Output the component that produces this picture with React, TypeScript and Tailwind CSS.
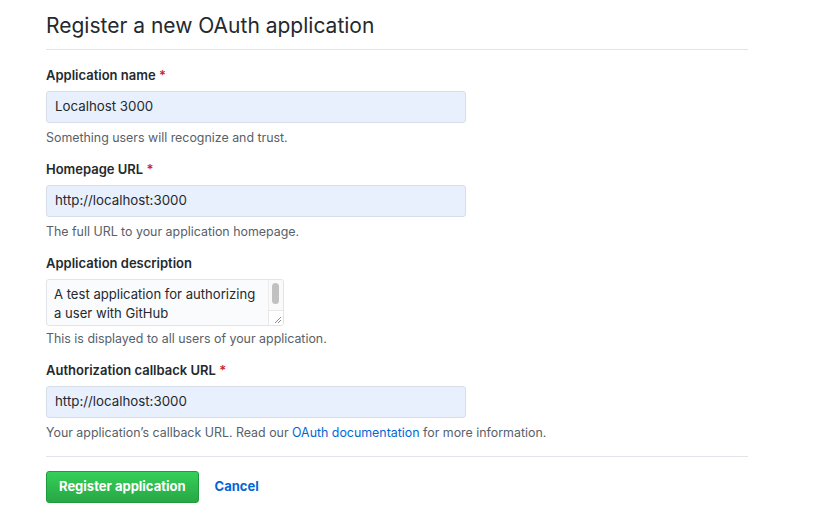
import React from "react";

const Req = () => <span className="text-[#cb2431]"> *</span>;

function Field({ label, required, value, help }: { label: string; required?: boolean; value: string; help: React.ReactNode }) {
  return (
    <div className="flex flex-col">
      <label className="text-[13px] font-semibold leading-[20px] text-[#24292e]">
        {label}
        {required && <Req />}
      </label>
      <div className="mt-[6px] flex h-[32px] w-[420px] items-center rounded-[3px] border border-[#d8dee8] bg-[#e8f0fe] px-[8px] text-[13.3px] text-[#24292e]">
        {value}
      </div>
      <p className="mt-[6px] text-[12.4px] leading-[18px] text-[#586069]">{help}</p>
    </div>
  );
}

export default function App() {
  return (
    <div className="h-[525px] w-[820px] bg-white" style={{ fontFamily: 'Inter, "Liberation Sans", Arial, sans-serif' }}>
      <div className="ml-[46px] w-[702px] pt-[11px]">
        <h2 className="border-b border-[#e1e4e8] pb-[8px] text-[21px] font-normal leading-[30px] text-[#24292e]">
          Register a new OAuth application
        </h2>
        <div className="mt-[15px] flex flex-col gap-[12px]">
          <Field label="Application name" required value="Localhost 3000" help="Something users will recognize and trust." />
          <Field label="Homepage URL" required value="http://localhost:3000" help="The full URL to your application homepage." />
          <div className="flex flex-col">
            <label className="text-[13px] font-semibold leading-[20px] text-[#24292e]">Application description</label>
            <div className="relative mt-[6px] h-[47px] w-[238px] overflow-hidden rounded-[3px] border border-[#e1e4e8] bg-[#fafbfc] pl-[7px] pr-[24px] pt-[5px] text-[13.1px] leading-[19px] text-[#24292e]">
              A test application for authorizing a user with GitHub
              <div className="absolute right-0 top-0 h-full w-[15px] border-l border-[#ececec] bg-[#fafafa]" />
              <div className="absolute right-[4px] top-[3px] h-[21px] w-[7px] rounded-full bg-[#c1c1c1]" />
              <div className="absolute bottom-0 right-0 h-[15px] w-[15px] border-l border-t border-[#e8e8e8] bg-white">
                <svg width="15" height="15" viewBox="0 0 15 15" className="absolute left-0 top-0">
                  <path d="M12 6 L6 12 M12 9 L9 12" stroke="#8a8a8a" strokeWidth="1" fill="none" />
                </svg>
              </div>
            </div>
            <p className="mt-[4px] text-[12.4px] leading-[18px] text-[#586069]">This is displayed to all users of your application.</p>
          </div>
          <Field
            label="Authorization callback URL"
            required
            value="http://localhost:3000"
            help={
              <>
                Your application’s callback URL. Read our <span className="text-[#0366d6]">OAuth documentation</span> for more information.
              </>
            }
          />
        </div>
        <div className="mt-[14px] border-t border-[#e1e4e8] pt-[14px] flex items-center">
          <button className="h-[32px] rounded-[3px] border border-[#1e9b3c] bg-gradient-to-b from-[#34d058] to-[#28a745] px-[12px] text-[13px] font-bold text-white">
            Register application
          </button>
          <span className="ml-[16px] text-[13px] font-bold text-[#0366d6]">Cancel</span>
        </div>
      </div>
    </div>
  );
}
